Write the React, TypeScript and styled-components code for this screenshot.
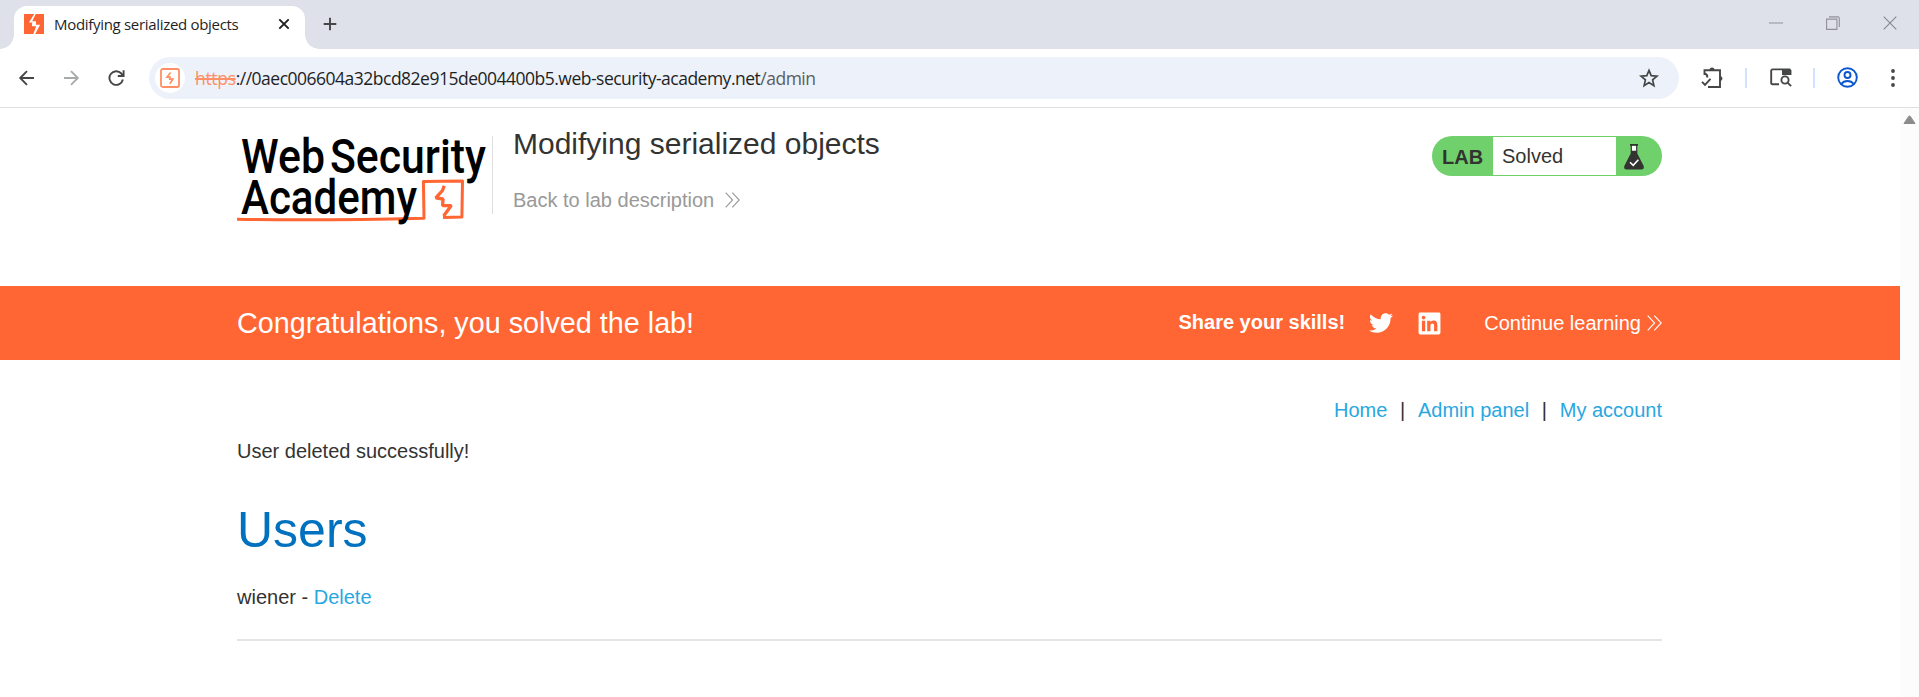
import React from 'react';
import styled, { createGlobalStyle } from 'styled-components';
import { FaTwitter, FaLinkedin } from 'react-icons/fa';

const GlobalStyle = createGlobalStyle`
  * { box-sizing: border-box; }
  body {
    margin: 0;
    background: #fff;
    color: #333332;
    font: 20px/24px "Liberation Sans", Arial, sans-serif;
    overflow: hidden;
  }
`;

const Window = styled.div`
  display: flex;
  flex-direction: column;
  height: 697px;
`;

const TabStrip = styled.div`
  display: flex;
  height: 49px;
  padding: 6px 0 0 14px;
  background: #dee1e9;
`;

const Tab = styled.div`
  position: relative;
  display: flex;
  align-items: center;
  width: 291px;
  height: 43px;
  padding: 0 15px 7px 10px;
  border-radius: 13px 13px 0 0;
  background: #fff;
  font: 15px/20px "Open Sans", "Noto Sans", sans-serif;
  color: #1f1f1f;
  &::before, &::after {
    content: '';
    position: absolute;
    bottom: 0;
    width: 14px;
    height: 14px;
  }
  &::before {
    left: -14px;
    background: radial-gradient(circle at 0 0, transparent 13.5px, #fff 14px);
  }
  &::after {
    right: -14px;
    background: radial-gradient(circle at 100% 0, transparent 13.5px, #fff 14px);
  }
`;

const TabTitle = styled.span`
  flex: 1;
  margin-left: 10px;
  letter-spacing: -0.31px;
  white-space: nowrap;
`;

const NewTab = styled.div`
  padding: 11px 0 0 18px;
  line-height: 0;
`;

const WindowControls = styled.div`
  display: flex;
  gap: 43px;
  margin-left: auto;
  padding: 10px 22px 0 0;
`;

const Toolbar = styled.div`
  display: flex;
  align-items: center;
  height: 59px;
  padding: 0 18px 1px;
  border-bottom: 1px solid #dfdfdf;
`;

const NavButtons = styled.div`
  display: flex;
  gap: 28px;
  width: 131px;
`;

const AddressBar = styled.div`
  display: flex;
  align-items: center;
  width: 1530px;
  height: 42px;
  padding: 0 20px 0 6px;
  border-radius: 21px;
  background: #ecf1fa;
`;

const SiteBadge = styled.div`
  display: grid;
  place-items: center;
  width: 30px;
  height: 30px;
  border-radius: 50%;
  background: #fff;
`;

const Url = styled.div`
  flex: 1;
  margin-left: 10px;
  font: 17.5px/24px "Open Sans", "Noto Sans", sans-serif;
  letter-spacing: -0.5px;
  color: #1f1f1f;
  white-space: nowrap;
`;

const Insecure = styled.span`
  color: #ff8f66;
  letter-spacing: -0.32px;
  text-decoration: line-through;
  text-decoration-thickness: 2px;
`;

const Path = styled.span`
  color: #5a5d62;
`;

const Actions = styled.div`
  display: flex;
  align-items: center;
  margin-left: 22px;
`;

const Divider = styled.i`
  width: 2px;
  height: 20px;
  margin: 0 23px 0 21px;
  background: #d3e3fd;
`;

const MenuButton = styled.span`
  margin-left: 33px;
  line-height: 0;
`;

const ProfileButton = styled.span`
  margin-left: -1px;
  line-height: 0;
`;

const Viewport = styled.div`
  display: flex;
  flex: 1;
`;

const Page = styled.main`
  flex: 1;
`;

const Scrollbar = styled.div`
  width: 19px;
  padding: 7px 0 0 3px;
  background: #fcfcfc;
  line-height: 0;
`;

const Container = styled.div`
  width: 1425px;
  margin: 0 238px 0 237px;
`;

const Header = styled(Container)`
  display: flex;
  align-items: flex-start;
  height: 178px;
`;

const LogoCell = styled.div`
  width: 256px;
  height: 78px;
  margin-top: 28px;
  border-right: 1px solid #dedede;
  line-height: 0;
  svg { overflow: visible; }
`;

const TitleCell = styled.div`
  flex: 1;
  padding: 18px 0 0 20px;
`;

const Title = styled.h2`
  margin: 0 0 26px;
  font-size: 30px;
  line-height: 36px;
  font-weight: 400;
`;

const BackLink = styled.a`
  display: flex;
  align-items: center;
  gap: 11px;
  color: #999;
`;

const LabStatus = styled.div`
  display: flex;
  width: 230px;
  height: 40px;
  margin-top: 28px;
  padding: 1px 0;
  border-radius: 20px;
  background: #70d16c;
  line-height: 40px;
`;

const LabLabel = styled.b`
  width: 61px;
  padding-left: 10px;
`;

const LabState = styled.span`
  width: 123px;
  padding-left: 9px;
  background: #fff;
  line-height: 38px;
`;

const LabIcon = styled.span`
  padding: 7px 0 0 7px;
  line-height: 0;
`;

const Banner = styled.section`
  height: 74px;
  background: #ff6633;
  color: #fff;
`;

const BannerRow = styled(Container)`
  display: flex;
  align-items: center;
  height: 74px;
`;

const BannerTitle = styled.h3`
  flex: 1;
  margin: 0;
  font-size: 28.75px;
  line-height: 36px;
  font-weight: 400;
`;

const Share = styled.b`
  margin: -2px 24px 0 0;
`;

const Social = styled.span<{ $gap: number }>`
  margin-right: ${p => p.$gap}px;
  line-height: 0;
`;

const Continue = styled.a`
  display: flex;
  align-items: center;
  gap: 6px;
`;

const TopLinks = styled.nav`
  display: flex;
  justify-content: flex-end;
  gap: 12.7px;
  padding: 38px 0 17px;
`;

const Link = styled.a`
  color: #29a7e0;
`;

const Message = styled.p`
  margin: 0;
`;

const Heading = styled.h1`
  margin: 37px 0 25px;
  font-size: 50px;
  line-height: 60px;
  font-weight: 400;
  color: #0071bf;
`;

const Rule = styled.hr`
  height: 2px;
  margin: 30px 0 0;
  border: 0;
  background: #e5e5e5;
`;

const Chevrons = () => (
  <svg width="15" height="16" viewBox="0 0 15 16" fill="none" stroke="currentColor" strokeWidth="1.1">
    <path d="M.7.7 7.6 8 .7 15.3M7.3.7 14.2 8 7.3 15.3" />
  </svg>
);

const AcademyLogo = () => (
  <svg width="250" height="90" viewBox="0 0 250 90" fontFamily="Roboto, sans-serif" fontSize="48" fontWeight="500" fill="#000">
    <text x="4" y="36.5" textLength="84" lengthAdjust="spacingAndGlyphs">Web</text>
    <text x="93" y="36.5" textLength="156" lengthAdjust="spacingAndGlyphs">Security</text>
    <path d="M0 83.2Q80 84.8 187 82.3L186.4 45.4 225.500 45 224.900 81 206 81.600" fill="none" stroke="#ff6633" strokeWidth="3" strokeLinejoin="round" />
    <path d="M207.200 49.800 205.500 54.500 198.800 61.800 206 63 205.600 69.600 214.300 69.600 206.600 80" fill="none" stroke="#ff6633" strokeWidth="3.300" strokeLinejoin="bevel" />
    <text x="4" y="77.500" textLength="176" lengthAdjust="spacingAndGlyphs">Academy</text>
  </svg>
);

const Flask = () => (
  <svg width="22" height="26" viewBox="0 0 22 26">
    <path d="M8 2h6v8H8z" fill="#fff" />
    <path d="M7 0h8v1.800H14.300V9.500L20.700 22Q21.400 25.500 18.500 25.500H3.500Q.6 25.500 1.300 22L7.700 9.500V1.800H7zM8.900 1.800V6.800H13.100V1.800z" fill="#333332" fillRule="evenodd" />
    <path d="m7 18.300 3.200 3.100 5.200-5.700" fill="none" stroke="#fff" strokeWidth="1.600" />
  </svg>
);

const Favicon = () => (
  <svg width="20" height="20" viewBox="0 0 20 20">
    <path d="M0 0h20v20H0z" fill="#ff6633" />
    <path d="M10.2 0 5 8.6h3.2L8 12.2h4.2L9.3 20h1.9l4.9-9.2h-4.2L12 7.3H8.2L11.7 0z" fill="#fff" />
  </svg>
);

const SiteIcon = () => (
  <svg width="20" height="20" viewBox="0 0 20 20" fill="none" stroke="#ff8f66">
    <rect x="1" y="1" width="18" height="18" rx="1.8" strokeWidth="1.8" />
    <path d="M10.6 4.4 7 9.1h3l-.3 2.1h3.2L9.8 15.8" strokeWidth="1.7" />
  </svg>
);

const TabClose = () => (
  <svg width="12" height="12" viewBox="0 0 12 12" stroke="#1f1f1f" strokeWidth="1.9">
    <path d="m1.3 1.3 9.4 9.4m0-9.4-9.4 9.4" />
  </svg>
);

const Back = () => (
  <svg width="17" height="16" viewBox="0 0 17 16" fill="none" stroke="#444746" strokeWidth="1.9">
    <path d="M16 8H2.2M9 1.2 2.2 8 9 14.8" />
  </svg>
);

const Forward = () => (
  <svg width="17" height="16" viewBox="0 0 17 16" fill="none" stroke="#a9abaa" strokeWidth="1.9">
    <path d="M1 8h13.8M8 1.2 14.8 8 8 14.8" />
  </svg>
);

const Reload = () => (
  <svg width="17" height="16" viewBox="0 0 17 16" fill="none" stroke="#444746" strokeWidth="1.9">
    <path d="M14.900 9.500A6.800 6.800 0 1 1 13.300 3.500L15.200 5.800M15.600.3V6H9.800" />
  </svg>
);

const Star = () => (
  <svg width="20" height="20" viewBox="0 0 20 20" fill="none" stroke="#444746" strokeWidth="1.7">
    <path d="m10 2.400 2.200 5.200 5.800.5-4.400 3.800 1.300 5.700-4.900-3-4.900 3 1.300-5.700L2 8.100l5.800-.5z" />
  </svg>
);

const Extensions = () => (
  <svg width="23" height="22" viewBox="0 0 23 22" fill="none" stroke="#444746" strokeWidth="1.9">
    <path d="M3.500 8V3.300H19V20H7" />
    <path d="M3.500 6.500q3.200.8 2.800 4M1 14.800l3 3 5.500-6" />
    <path d="M8.500 3a2.500 2.500 0 0 1 5 0zM19 9a2.500 2.500 0 0 1 0 5z" fill="#444746" stroke="none" />
  </svg>
);

const TabSearch = () => (
  <svg width="22" height="19" viewBox="0 0 22 19" fill="none" stroke="#444746" strokeWidth="1.9">
    <path d="M9 16.200H2.500Q1.200 16.200 1.200 15V3Q1.200 1.400 2.700 1.400H19.500L20.500 2.500V7" />
    <path d="M12 1h7.500L21 2.500V7h-9z" fill="#444746" stroke="none" />
    <circle cx="15" cy="12" r="3.600" />
    <path d="m17.600 14.600 3.500 3.500" />
  </svg>
);

const Profile = () => (
  <svg width="21" height="21" viewBox="0 0 21 21" fill="none" stroke="#0b57d0" strokeWidth="1.9">
    <circle cx="10.5" cy="10.5" r="9.3" />
    <circle cx="10.5" cy="8" r="3" />
    <path d="M4.200 17q2.300-3 6.300-3t6.300 3" />
  </svg>
);

const Menu = () => (
  <svg width="4" height="18" viewBox="0 0 4 18" fill="#444746">
    <circle cx="2" cy="2" r="1.900" /><circle cx="2" cy="9" r="1.900" /><circle cx="2" cy="16" r="1.900" />
  </svg>
);

export default function App() {
  return (
    <Window>
      <GlobalStyle />
      <TabStrip>
        <Tab>
          <Favicon />
          <TabTitle>Modifying serialized objects</TabTitle>
          <TabClose />
        </Tab>
        <NewTab>
          <svg width="14" height="14" viewBox="0 0 14 14" stroke="#444746" strokeWidth="1.9"><path d="M7 .7v12.600M.7 7h12.600" /></svg>
        </NewTab>
        <WindowControls>
          <svg width="14" height="14" viewBox="0 0 14 14"><path d="M0 6.200h14v1.600H0z" fill="#adb0b5" /></svg>
          <svg width="14" height="14" viewBox="0 0 14 14" fill="none" stroke="#8f9196" strokeWidth="1.100">
            <path d="M.6 3.100h10.300v10.300H.6z" /><path d="M3 .9h8.700q1.600 0 1.600 1.600V11" />
          </svg>
          <svg width="14" height="14" viewBox="0 0 14 14" stroke="#85878b" strokeWidth="1.100"><path d="m.7.7 12.600 12.600m0-12.600L.7 13.300" /></svg>
        </WindowControls>
      </TabStrip>
      <Toolbar>
        <NavButtons><Back /><Forward /><Reload /></NavButtons>
        <AddressBar>
          <SiteBadge><SiteIcon /></SiteBadge>
          <Url><Insecure>https</Insecure>://0aec006604a32bcd82e915de004400b5.web-security-academy.net<Path>/admin</Path></Url>
          <Star />
        </AddressBar>
        <Actions>
          <Extensions />
          <Divider />
          <TabSearch />
          <Divider />
          <ProfileButton><Profile /></ProfileButton>
          <MenuButton><Menu /></MenuButton>
        </Actions>
      </Toolbar>
      <Viewport>
        <Page>
          <Header>
            <LogoCell><AcademyLogo /></LogoCell>
            <TitleCell>
              <Title>Modifying serialized objects</Title>
              <BackLink>Back to lab description<Chevrons /></BackLink>
            </TitleCell>
            <LabStatus>
              <LabLabel>LAB</LabLabel>
              <LabState>Solved</LabState>
              <LabIcon><Flask /></LabIcon>
            </LabStatus>
          </Header>
          <Banner>
            <BannerRow>
              <BannerTitle>Congratulations, you solved the lab!</BannerTitle>
              <Share>Share your skills!</Share>
              <Social $gap={24}><FaTwitter size={24} /></Social>
              <Social $gap={42}><FaLinkedin size={25} /></Social>
              <Continue>Continue learning<Chevrons /></Continue>
            </BannerRow>
          </Banner>
          <Container>
            <TopLinks>
              <Link>Home</Link><span>|</span><Link>Admin panel</Link><span>|</span><Link>My account</Link>
            </TopLinks>
            <Message>User deleted successfully!</Message>
            <Heading>Users</Heading>
            <div>wiener - <Link>Delete</Link></div>
            <Rule />
          </Container>
        </Page>
        <Scrollbar>
          <svg width="13" height="10" viewBox="0 0 13 10"><path d="M1 8.500 5.700 1.400q.8-1 1.600 0L12 8.500z" fill="#8b8b8b" stroke="#8b8b8b" strokeLinejoin="round" /></svg>
        </Scrollbar>
      </Viewport>
    </Window>
  );
}
